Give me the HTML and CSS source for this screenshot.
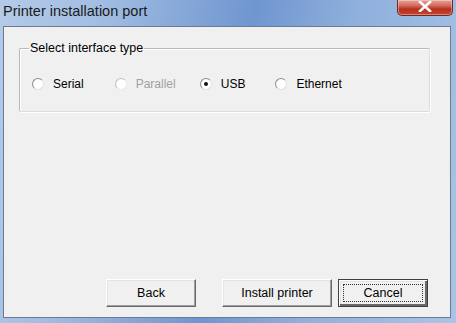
FILE: index.html
```html
<!DOCTYPE html>
<html lang="en">
<head>
  <meta charset="UTF-8">
  <title>Printer installation port</title>
  <link rel="stylesheet" href="styles.css">
</head>
<body>

  <!-- Dialog frame -->
  <div class="window">
    <div class="title-bar">
      <span class="title-text">Printer installation port</span>
      <div class="close-button">
        <svg width="14" height="11" viewBox="0 0 14 11">
          <path d="M2 1 L12 10 M12 1 L2 10" stroke="#ffffff" stroke-width="2.6" stroke-linecap="square"/>
        </svg>
      </div>
    </div>

    <div class="client">
      <!-- Interface type group -->
      <fieldset class="group-box">
        <legend>Select interface type</legend>
        <div class="radio-row">
          <label class="radio"><span class="radio-circle"></span>Serial</label>
          <label class="radio disabled"><span class="radio-circle"></span>Parallel</label>
          <label class="radio"><span class="radio-circle checked"></span>USB</label>
          <label class="radio"><span class="radio-circle"></span>Ethernet</label>
        </div>
      </fieldset>

      <!-- Bottom buttons -->
      <div class="button-row">
        <button class="dlg-button back">Back</button>
        <button class="dlg-button install">Install printer</button>
        <button class="dlg-button cancel default"><span class="focus-rect">Cancel</span></button>
      </div>
    </div>
  </div>

</body>
</html>
```

FILE: styles.css
```css
/* Page */
body {
  margin: 0;
  padding: 0;
  font-family: 'Liberation Sans', Arial, sans-serif;
  font-size: 12px;
  color: #000;
}

/* Window frame */
.window {
  width: 456px;
  height: 323px;
  box-sizing: border-box;
  padding: 0 5px 5px 3px;
  display: flex;
  flex-direction: column;
  background: linear-gradient(100deg, #b4cbe8 0%, #a1bde2 20%, #6f96cf 50%, #8fb0dc 70%, #a9c4e6 100%);
}

.title-bar {
  height: 26px;
  flex: none;
  display: flex;
  align-items: flex-start;
  justify-content: space-between;
}

.title-text {
  font-size: 14.5px;
  color: #1a1a1a;
  margin-top: 3px;
}

.close-button {
  width: 56px;
  height: 16px;
  margin-right: -2px;
  box-sizing: border-box;
  border: 1px solid #6e2a22;
  border-top: none;
  border-radius: 0 0 5px 5px;
  background: linear-gradient(to bottom, #e8a495 0%, #d0675a 40%, #b8301c 60%, #c4442f 100%);
  box-shadow: inset 0 0 0 1px rgba(255, 255, 255, 0.35);
  display: flex;
  justify-content: center;
  align-items: center;
}

.close-button svg {
  margin-top: -2px;
}

/* Client area */
.client {
  flex: 1;
  background: #f0f0f0;
  border: 1px solid #6c7b90;
  display: flex;
  flex-direction: column;
}

/* Group box */
.group-box {
  margin: 14px 20px 0 15px;
  height: 71px;
  box-sizing: border-box;
  border: 1px solid;
  border-color: #b9b9b9 #dcdcdc #dcdcdc #b9b9b9;
  box-shadow: 1px 1px 0 #ffffff, inset 1px 1px 0 #ffffff;
  padding: 0 0 0 12px;
  border-radius: 2px;
}

.group-box legend {
  padding: 0 1px;
  margin-left: -3px;
  font-size: 12.5px;
  line-height: 15px;
}

.radio-row {
  display: flex;
  margin-top: 21px;
}

.radio {
  display: flex;
  align-items: center;
  line-height: 14px;
}

.radio:nth-child(2) { margin-left: 31px; }
.radio:nth-child(3) { margin-left: 24px; }
.radio:nth-child(4) { margin-left: 30px; }

.radio.disabled {
  color: #a0a0a0;
}

.radio-circle {
  width: 12px;
  height: 12px;
  box-sizing: border-box;
  border-radius: 50%;
  border: 1px solid #8f8f8f;
  border-right-color: #e2e2e2;
  border-bottom-color: #e2e2e2;
  background: radial-gradient(circle at 55% 55%, #ffffff 55%, #e6e6e6 100%);
  margin-right: 9px;
  position: relative;
}

.radio.disabled .radio-circle {
  border-color: #c0c0c0 #ececec #ececec #c0c0c0;
}

.radio-circle.checked::after {
  content: "";
  position: absolute;
  left: 3px;
  top: 3px;
  width: 4px;
  height: 4px;
  border-radius: 50%;
  background: #111;
}

/* Buttons */
.button-row {
  margin-top: auto;
  margin-bottom: 10px;
  display: flex;
  padding-left: 102px;
}

.dlg-button {
  height: 28px;
  width: 90px;
  font-family: 'Liberation Sans', Arial, sans-serif;
  font-size: 12.5px;
  color: #000;
  background: #f0f0f0;
  border: 1px solid;
  border-color: #ffffff #696969 #696969 #ffffff;
  box-shadow: inset -1px -1px 0 #a0a0a0, inset 1px 1px 0 #e3e3e3;
  padding: 0;
}

.dlg-button.install {
  width: 110px;
  margin-left: 26px;
}

.dlg-button.cancel {
  margin-left: 6px;
}

.dlg-button.default {
  border: 1px solid #404040;
  box-shadow: inset 1px 1px 0 #ffffff, inset -2px -2px 0 #696969, inset 2px 2px 0 #e3e3e3;
  padding: 4px;
}

.focus-rect {
  display: block;
  height: 100%;
  box-sizing: border-box;
  border: 1px dotted #333;
  line-height: 17px;
}
```
